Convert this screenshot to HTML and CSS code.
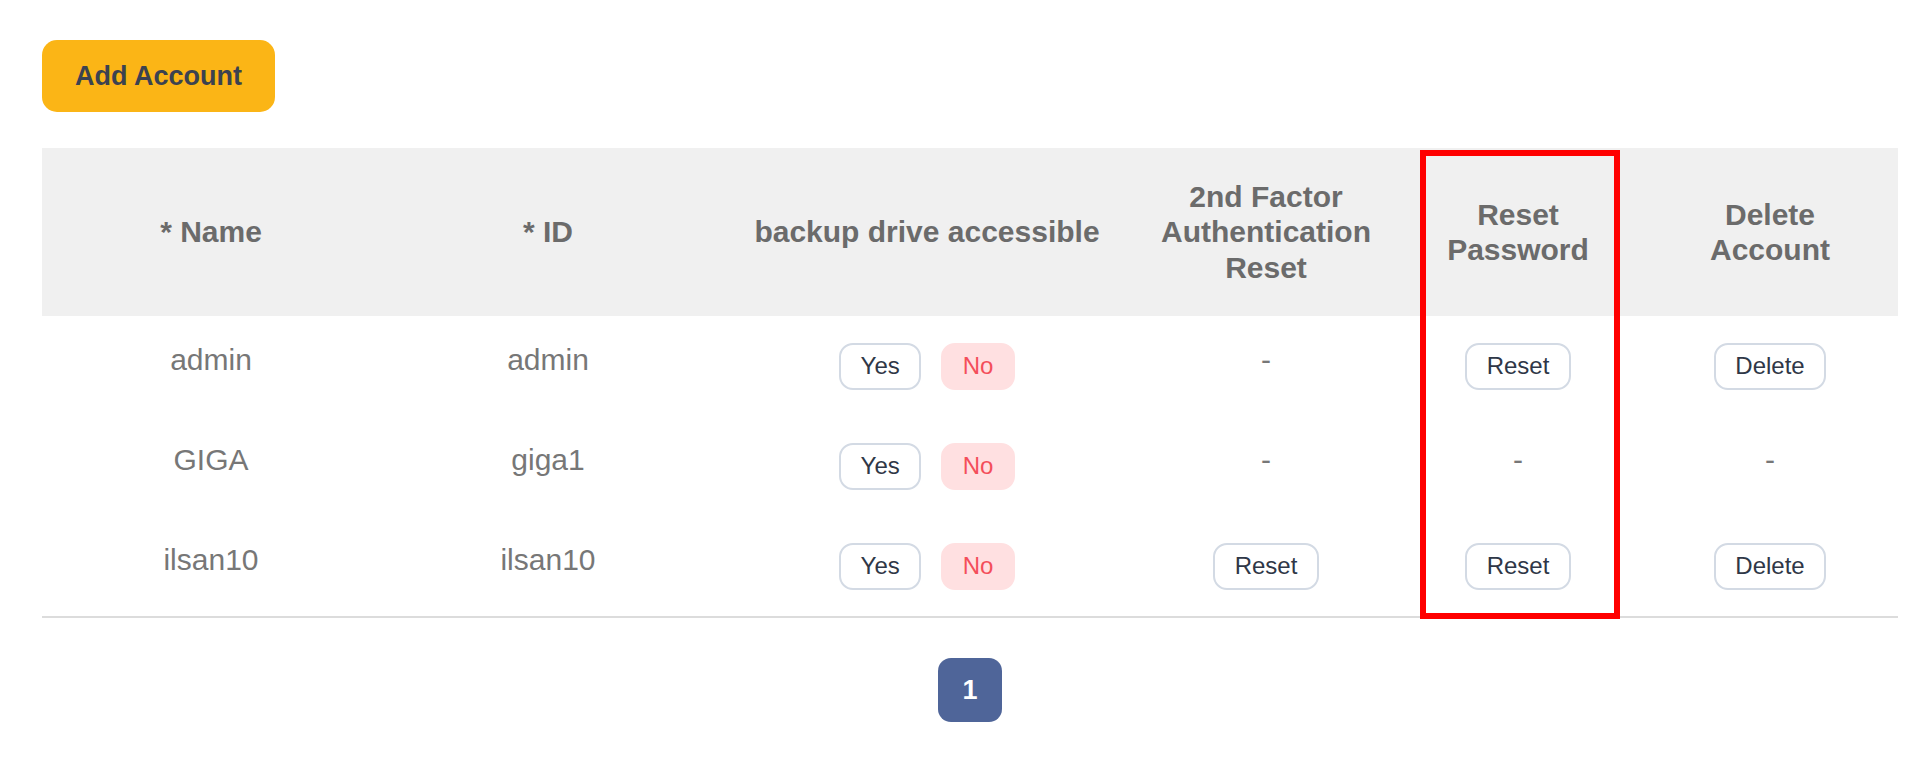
FILE: index.html
```html
<!DOCTYPE html>
<html lang="en">
<head>
<meta charset="utf-8">
<title>Accounts</title>
<link rel="stylesheet" href="styles.css">
</head>
<body>
<div class="page">
  <button class="add-btn" type="button">Add Account</button>

  <div class="table">
    <div class="row head">
      <div class="cell">* Name</div>
      <div class="cell">* ID</div>
      <div class="cell">backup drive accessible</div>
      <div class="cell">2nd Factor Authentication Reset</div>
      <div class="cell">Reset Password</div>
      <div class="cell">Delete Account</div>
    </div>

    <div class="row">
      <div class="cell text">admin</div>
      <div class="cell text">admin</div>
      <div class="cell toggle"><button class="btn">Yes</button><button class="btn no">No</button></div>
      <div class="cell text">-</div>
      <div class="cell"><button class="btn">Reset</button></div>
      <div class="cell"><button class="btn">Delete</button></div>
    </div>

    <div class="row">
      <div class="cell text">GIGA</div>
      <div class="cell text">giga1</div>
      <div class="cell toggle"><button class="btn">Yes</button><button class="btn no">No</button></div>
      <div class="cell text">-</div>
      <div class="cell text">-</div>
      <div class="cell text">-</div>
    </div>

    <div class="row last">
      <div class="cell text">ilsan10</div>
      <div class="cell text">ilsan10</div>
      <div class="cell toggle"><button class="btn">Yes</button><button class="btn no">No</button></div>
      <div class="cell"><button class="btn">Reset</button></div>
      <div class="cell"><button class="btn">Reset</button></div>
      <div class="cell"><button class="btn">Delete</button></div>
    </div>
  </div>

  <div class="pager">
    <button class="page-btn" type="button">1</button>
  </div>

  <div class="highlight"></div>
</div>
</body>
</html>
```

FILE: styles.css
```css
* {
  box-sizing: border-box;
}

html, body {
  margin: 0;
  padding: 0;
  background: #ffffff;
}

body {
  font-family: "Liberation Sans", Arial, sans-serif;
  color: #6e6e6e;
}

.page {
  position: relative;
  padding: 40px 22px 0 42px;
  width: 1920px;
}

.add-btn {
  display: inline-flex;
  align-items: center;
  height: 72px;
  padding: 0 33px;
  border: none;
  border-radius: 15px;
  background: #fbb516;
  color: #3b4250;
  font-family: "Liberation Sans", Arial, sans-serif;
  font-size: 27px;
  font-weight: bold;
  cursor: pointer;
}

.table {
  margin-top: 36px;
  width: 1856px;
}

.row {
  display: grid;
  grid-template-columns: 338px 336px 422px 256px 248px 256px;
  height: 100px;
}

.row.head {
  height: 168px;
  background: #f0f0f0;
}

.row.last {
  height: 102px;
  border-bottom: 2px solid #dcdcdc;
}

.cell {
  display: flex;
  align-items: center;
  justify-content: center;
  text-align: center;
  padding: 0 24px;
}

.head .cell {
  font-size: 30px;
  font-weight: bold;
  line-height: 35.5px;
  color: #6b6b6b;
}

.cell.text {
  font-size: 30px;
  color: #777777;
  padding-bottom: 12px;
}

.toggle {
  gap: 20px;
}

.btn {
  display: inline-flex;
  align-items: center;
  justify-content: center;
  height: 47px;
  padding: 0 19.5px;
  border: 2px solid #d3dae4;
  border-radius: 14px;
  background: #ffffff;
  color: #2f3747;
  font-family: "Liberation Sans", Arial, sans-serif;
  font-size: 24px;
  cursor: pointer;
}

.btn.no {
  border-color: #ffe0e1;
  background: #ffe0e1;
  color: #f44e5a;
}

.pager {
  display: flex;
  justify-content: center;
  width: 1856px;
  margin-top: 40px;
}

.page-btn {
  width: 64px;
  height: 64px;
  border: none;
  border-radius: 13px;
  background: #4f6599;
  color: #ffffff;
  font-family: "Liberation Sans", Arial, sans-serif;
  font-size: 27px;
  font-weight: bold;
  cursor: pointer;
}

.highlight {
  position: absolute;
  left: 1420px;
  top: 150px;
  width: 200px;
  height: 469px;
  border: 6px solid #ff0000;
  pointer-events: none;
}
```
